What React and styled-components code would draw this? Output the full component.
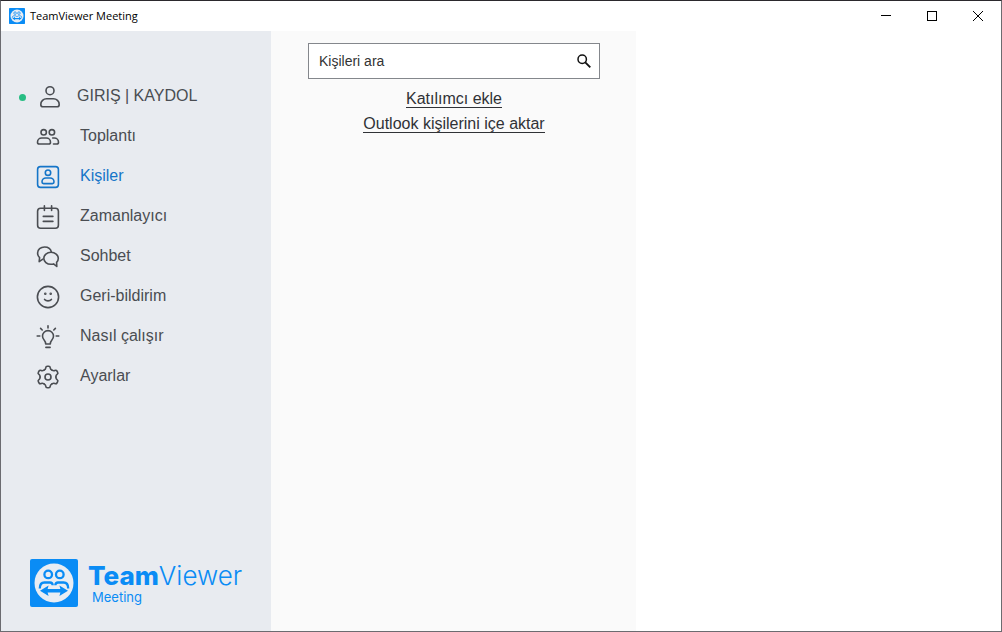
import React from 'react';
import styled, { createGlobalStyle, css } from 'styled-components';

const GlobalStyle = createGlobalStyle`
  * {
    box-sizing: border-box;
  }
  body {
    margin: 0;
    background: #fff;
    font-family: "Liberation Sans", Arial, sans-serif;
  }
`;

const PersonIcon = () => (
  <Icon viewBox="0 0 24 24" aria-hidden="true">
    <circle cx="12" cy="5.7" r="4" />
    <path d="M2.8 19.4c0-3.2 2.6-5.6 5.8-5.6h6.8c3.2 0 5.8 2.4 5.8 5.6 0 1.6-1 2.4-2.4 2.4H5.2c-1.4 0-2.4-.8-2.4-2.4z" />
  </Icon>
);

const PeopleIcon = () => (
  <Icon viewBox="0 0 24 24" aria-hidden="true">
    <circle cx="7.7" cy="7.3" r="2.7" />
    <circle cx="15.9" cy="7.3" r="2.7" />
    <path d="M1.5 17.2c0-2.4 1.8-4.2 4.2-4.2h4.6c2.4 0 4.2 1.8 4.2 4.2 0 1.2-.8 1.8-1.8 1.8H3.3c-1 0-1.8-.6-1.8-1.8z" />
    <path d="M16.7 13h1.6c2.4 0 4.2 1.8 4.2 4.2 0 1.2-.8 1.8-1.8 1.8h-3.200" />
  </Icon>
);

const ContactIcon = () => (
  <Icon viewBox="0 0 24 24" aria-hidden="true">
    <rect x="1.6" y="1.6" width="20.8" height="20.8" rx="2.8" />
    <circle cx="12" cy="7.7" r="2.7" />
    <path d="M6 17c0-2.300 1.700-4 3.900-4h4.200c2.200 0 3.900 1.700 3.900 4 0 1-.7 1.600-1.600 1.600H7.600C6.700 18.600 6 18 6 17z" />
  </Icon>
);

const CalendarIcon = () => (
  <Icon viewBox="0 0 24 24" aria-hidden="true">
    <rect x="1.6" y="3.2" width="20.8" height="20" rx="3" />
    <path d="M8.4.8v4.6M15.6.8v4.6M7.3 11.4h9.600M7.3 16.400h9.600" />
  </Icon>
);

const ChatIcon = () => (
  <Icon viewBox="0 0 24 24" aria-hidden="true">
    <path d="M15.4 7.2C14.8 4 12 2 8.6 2 4.600 2 1.600 4.500 1.600 8c0 2 .8 3.600 2 4.700l-.4 3.900 3.700-2.500" />
    <path d="M15 7.300c-4.100 0-7.200 2.600-7.200 6s3.100 6 7.200 6c.9 0 1.800-.1 2.600-.4l3.200 2.600-.2-4.100c1.100-1.100 1.700-2.500 1.700-4.100 0-3.400-3.200-6-7.300-6z" />
  </Icon>
);

const SmileIcon = () => (
  <Icon viewBox="0 0 24 24" aria-hidden="true">
    <circle cx="12" cy="12" r="10.6" />
    <path d="M8.6 14.4c1.6 1.900 5.200 1.900 6.800 0" />
    <circle cx="9.3" cy="8.7" r=".5" fill="currentColor" />
    <circle cx="14.7" cy="8.7" r=".5" fill="currentColor" />
  </Icon>
);

const BulbIcon = () => (
  <Icon viewBox="0 0 24 24" aria-hidden="true">
    <path d="M9.7 19c0-1.800-.7-2.900-1.600-4a5.500 5.500 0 1 1 7.800 0c-.9 1.100-1.600 2.200-1.600 4z" />
    <path d="M9.900 22.400h4.200M12 .8v2.200M1.200 11h2.600M20.200 11h2.600M4.600 3.400l1.600 1.600M19.400 3.400L17.800 5" />
  </Icon>
);

// one tooth, drawn six times around the centre
const GearIcon = () => (
  <Icon viewBox="0 0 24 24" aria-hidden="true">
    {[0, 60, 120, 180, 240, 300].map((angle) => (
      <path
        key={angle}
        transform={`rotate(${angle} 12 12)`}
        d="M8.05 5.16c1.1-.6 1.6-1.2 1.700-2.300.1-1.100.7-1.600 1.500-1.600h1.500c.8 0 1.400.5 1.500 1.600.1 1.100.6 1.700 1.700 2.300"
      />
    ))}
    <circle cx="12" cy="12" r="3" />
  </Icon>
);

const BrandMark = ({ size }) => (
  <svg width={size} height={size} viewBox="0 0 48 48" aria-hidden="true">
    <rect width="48" height="48" rx="2" fill="#0a8cf5" />
    <circle cx="24" cy="24" r="19.5" fill="#e9edf3" />
    <g fill="none" stroke="#0a8cf5" strokeWidth="2.300">
      <circle cx="18.2" cy="15.400" r="3.800" />
      <circle cx="29.800" cy="15.400" r="3.800" />
      <path d="M9.800 29.500c0-3.900 1.800-6 4.600-6h5.600c1.600 0 2.600.8 2.700 2.700" />
      <path d="M38.200 29.500c0-3.900-1.800-6-4.600-6H28c-1.600 0-2.600.8-2.700 2.700" />
    </g>
    <path
      d="M10 31.800l8.600-5.200-1 3.500h12.800l-1-3.500 8.600 5.200-8.600 5.200 1-3.500H17.600l1 3.500z"
      fill="#0a8cf5"
    />
  </svg>
);

const navItems = [
  { label: 'Toplantı', icon: PeopleIcon },
  { label: 'Kişiler', icon: ContactIcon, active: true },
  { label: 'Zamanlayıcı', icon: CalendarIcon },
  { label: 'Sohbet', icon: ChatIcon },
  { label: 'Geri-bildirim', icon: SmileIcon },
  { label: 'Nasıl çalışır', icon: BulbIcon },
  { label: 'Ayarlar', icon: GearIcon },
];

const App = () => (
  <>
    <GlobalStyle />
    <Window>
      <TitleBar>
        <BrandMark size={16} />
        <Title>TeamViewer Meeting</Title>
        <WindowButton aria-label="Simge durumuna küçült">
          <svg width="10" height="10" viewBox="0 0 10 10" shapeRendering="crispEdges">
            <path d="M0 4.5h10" stroke="#000" />
          </svg>
        </WindowButton>
        <WindowButton aria-label="Ekranı kapla">
          <svg width="10" height="10" viewBox="0 0 10 10" shapeRendering="crispEdges">
            <rect x=".5" y=".5" width="9" height="9" fill="none" stroke="#000" />
          </svg>
        </WindowButton>
        <WindowButton aria-label="Kapat">
          <svg width="10" height="10" viewBox="0 0 10 10">
            <path d="M0 0l10 10M10 0L0 10" stroke="#000" />
          </svg>
        </WindowButton>
      </TitleBar>
      <Body>
        <Sidebar>
          <Nav>
            <NavLink href="#login" $account>
              <StatusDot />
              <PersonIcon />
              <span>GIRIŞ | KAYDOL</span>
            </NavLink>
            {navItems.map(({ label, icon: ItemIcon, active }) => (
              <NavLink key={label} href={`#${label}`} $active={active}>
                <ItemIcon />
                <span>{label}</span>
              </NavLink>
            ))}
          </Nav>
          <Brand>
            <BrandMark size={48} />
            <BrandText>
              <BrandName>
                <strong>Team</strong>Viewer
              </BrandName>
              <BrandProduct>Meeting</BrandProduct>
            </BrandText>
          </Brand>
        </Sidebar>
        <ContactsPanel>
          <SearchBox>
            <SearchInput type="text" placeholder="Kişileri ara" aria-label="Kişileri ara" />
            <SearchButton aria-label="Ara">
              <svg width="14" height="14" viewBox="0 0 14 14" fill="none" stroke="#111">
                <circle cx="5.2" cy="5.2" r="4.2" strokeWidth="1.5" />
                <path d="M8.3 8.3l5 5" strokeWidth="1.9" />
              </svg>
            </SearchButton>
          </SearchBox>
          <Actions>
            <ActionLink href="#add">Katılımcı ekle</ActionLink>
            <ActionLink href="#import">Outlook kişilerini içe aktar</ActionLink>
          </Actions>
        </ContactsPanel>
        <Content />
      </Body>
    </Window>
  </>
);

const Window = styled.div`
  min-height: 100vh;
  display: flex;
  flex-direction: column;
  background: #fff;
  border: 1px solid #6b6b70;
  border-top-color: #2b292d;
`;

const TitleBar = styled.header`
  display: flex;
  align-items: center;
  height: 30px;
  padding-left: 8px;
`;

const Title = styled.h1`
  flex: 1;
  margin: 0 0 0 5px;
  font: 400 11px/16px "Open Sans", "Noto Sans", sans-serif;
  color: #000;
`;

const WindowButton = styled.button`
  display: flex;
  align-items: center;
  justify-content: center;
  width: 46px;
  height: 30px;
  padding: 0;
  border: 0;
  background: transparent;
`;

const Body = styled.div`
  flex: 1;
  display: flex;
`;

const Sidebar = styled.aside`
  flex: 0 0 270px;
  display: flex;
  flex-direction: column;
  justify-content: space-between;
  padding: 45px 0 24px;
  background: #e8ebf0;
`;

const Nav = styled.nav`
  display: flex;
  flex-direction: column;
`;

const Icon = styled.svg`
  flex: none;
  width: 24px;
  height: 24px;
  margin-top: 2px;
  fill: none;
  stroke: currentColor;
  stroke-width: 1.6;
  stroke-linecap: round;
  stroke-linejoin: round;
`;

const NavLink = styled.a`
  display: flex;
  align-items: center;
  gap: 20px;
  height: 40px;
  padding-left: 35px;
  font-size: 16px;
  line-height: 20px;
  color: #4a4d52;
  text-decoration: none;

  ${({ $account }) =>
    $account &&
    css`
      gap: 15px;
      padding-left: 18px;

      ${Icon} {
        margin-left: -3px;
      }
    `}

  ${({ $active }) =>
    $active &&
    css`
      color: #1575c8;
    `}
`;

const StatusDot = styled.span`
  width: 7px;
  height: 7px;
  margin-top: 2px;
  border-radius: 50%;
  background: #27bd83;
`;

const Brand = styled.div`
  display: flex;
  gap: 10px;
  padding-left: 29px;
`;

const BrandText = styled.div`
  display: flex;
  flex-direction: column;
  color: #0a8cf5;
  font-family: Inter, Roboto, sans-serif;
`;

const BrandName = styled.div`
  font-size: 26px;
  line-height: 34px;
  font-weight: 300;

  strong {
    font-weight: 800;
  }
`;

const BrandProduct = styled.div`
  padding-left: 4px;
  font-size: 13px;
  line-height: 8px;
`;

const ContactsPanel = styled.main`
  flex: 0 0 365px;
  padding: 12px 36px 0 37px;
  background: #fafafa;
`;

const SearchBox = styled.div`
  display: flex;
  align-items: center;
  height: 36px;
  background: #fff;
  border: 1px solid #84878c;
`;

const SearchInput = styled.input`
  flex: 1;
  min-width: 0;
  padding: 0 10px;
  border: 0;
  outline: 0;
  background: transparent;
  font: 14px/20px "Liberation Sans", Arial, sans-serif;
  color: #333;

  &::placeholder {
    color: #333;
    opacity: 1;
  }
`;

const SearchButton = styled.button`
  display: flex;
  align-items: center;
  justify-content: center;
  width: 30px;
  height: 34px;
  padding: 0;
  border: 0;
  background: transparent;
`;

const Actions = styled.div`
  display: flex;
  flex-direction: column;
  align-items: center;
  gap: 7px;
  padding-top: 11px;
`;

const ActionLink = styled.a`
  font-size: 16px;
  line-height: 17px;
  color: #303236;
  text-decoration: none;
  border-bottom: 1px solid #303236;
`;

const Content = styled.section`
  flex: 1;
  background: #fff;
`;

export default App;
